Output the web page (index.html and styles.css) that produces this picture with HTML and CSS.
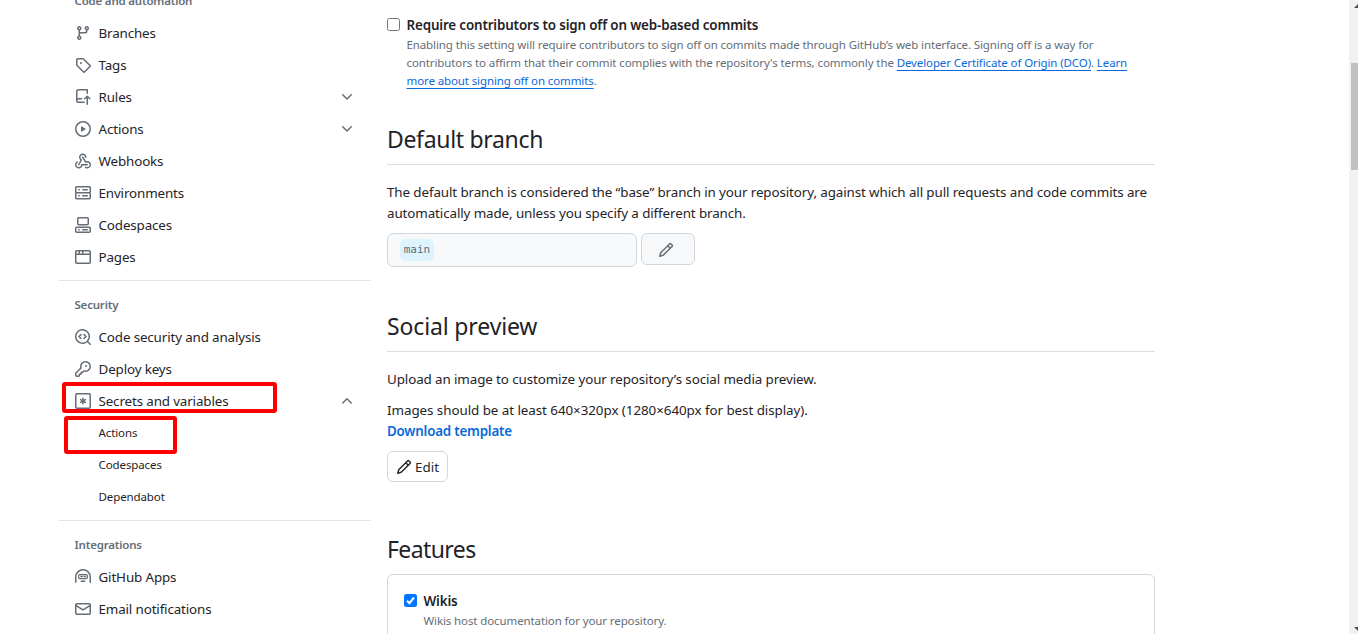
FILE: index.html
```
<!DOCTYPE html>
<html lang="en">
<head>
<meta charset="utf-8">
<title>Repository settings</title>
<link rel="stylesheet" href="styles.css">
</head>
<body>
<div class="page">
  <nav class="sidebar">
    <h3 class="group-title group-first">Code and automation</h3>
    <a class="item"><svg class="icon" viewBox="0 0 16 16"><path d="M9.5 3.25a2.25 2.25 0 1 1 3 2.122V6A2.5 2.5 0 0 1 10 8.5H6a1 1 0 0 0-1 1v1.128a2.251 2.251 0 1 1-1.5 0V5.372a2.25 2.25 0 1 1 1.5 0v1.836A2.493 2.493 0 0 1 6 7h4a1 1 0 0 0 1-1v-.628A2.25 2.25 0 0 1 9.5 3.25Zm-6 0a.75.75 0 1 0 1.5 0 .75.75 0 0 0-1.5 0Zm8.25-.75a.75.75 0 1 0 0 1.5.75.75 0 0 0 0-1.5ZM4.25 12a.75.75 0 1 0 0 1.5.75.75 0 0 0 0-1.5Z"/></svg><span>Branches</span></a>
    <a class="item"><svg class="icon" viewBox="0 0 16 16"><path d="M1 7.775V2.75C1 1.784 1.784 1 2.75 1h5.025c.464 0 .91.184 1.238.513l6.25 6.25a1.75 1.75 0 0 1 0 2.474l-5.026 5.026a1.75 1.75 0 0 1-2.474 0l-6.25-6.25A1.752 1.752 0 0 1 1 7.775Zm1.5 0c0 .066.026.13.073.177l6.25 6.25a.25.25 0 0 0 .354 0l5.025-5.025a.25.25 0 0 0 0-.354l-6.25-6.25a.25.25 0 0 0-.177-.073H2.75a.25.25 0 0 0-.25.25ZM6 5a1 1 0 1 1 0 2 1 1 0 0 1 0-2Z"/></svg><span>Tags</span></a>
    <a class="item"><svg class="icon" viewBox="0 0 16 16"><path d="M1 2.5A2.5 2.5 0 0 1 3.5 0h8.75a.75.75 0 0 1 .75.75v3.5a.75.75 0 0 1-1.5 0V1.5h-8a1 1 0 0 0-1 1v6.708A2.493 2.493 0 0 1 3.5 9h3.25a.75.75 0 0 1 0 1.5H3.5a1 1 0 0 0 0 2h5.75a.75.75 0 0 1 0 1.5H3.5A2.5 2.5 0 0 1 1 11.5Zm13.23 7.79v-.001l-1.224-1.224v6.184a.75.75 0 0 1-1.5 0V9.066L10.28 10.29a.75.75 0 0 1-1.06-1.061l2.505-2.504a.75.75 0 0 1 1.06 0L15.29 9.23a.751.751 0 0 1-.018 1.042.751.751 0 0 1-1.042.018Z"/></svg><span>Rules</span><svg class="icon chevron" viewBox="0 0 16 16"><path d="M12.78 5.22a.749.749 0 0 1 0 1.06l-4.25 4.25a.749.749 0 0 1-1.06 0L3.22 6.28a.749.749 0 1 1 1.06-1.06L8 8.939l3.72-3.719a.749.749 0 0 1 1.06 0Z"/></svg></a>
    <a class="item"><svg class="icon" viewBox="0 0 16 16"><path d="M8 0a8 8 0 1 1 0 16A8 8 0 0 1 8 0ZM1.5 8a6.5 6.5 0 1 0 13 0 6.5 6.5 0 0 0-13 0Zm4.879-2.773 4.264 2.559a.25.25 0 0 1 0 .428l-4.264 2.559A.25.25 0 0 1 6 10.559V5.442a.25.25 0 0 1 .379-.215Z"/></svg><span>Actions</span><svg class="icon chevron" viewBox="0 0 16 16"><path d="M12.78 5.22a.749.749 0 0 1 0 1.06l-4.25 4.25a.749.749 0 0 1-1.06 0L3.22 6.28a.749.749 0 1 1 1.06-1.06L8 8.939l3.72-3.719a.749.749 0 0 1 1.06 0Z"/></svg></a>
    <a class="item"><svg class="icon" viewBox="0 0 16 16"><path d="M5.5 4.25a2.25 2.25 0 0 1 4.5 0 .75.75 0 0 0 1.5 0 3.75 3.75 0 1 0-6.14 2.889l-2.272 4.258a.75.75 0 0 0 1.324.706L7 7.25a.75.75 0 0 0-.309-1.015A2.25 2.25 0 0 1 5.5 4.25Z"/><path d="M7.364 3.607a.75.75 0 0 1 1.03.257l2.608 4.349a3.75 3.75 0 1 1-.628 6.785.75.75 0 0 1 .752-1.299 2.25 2.25 0 1 0-.033-3.88.75.75 0 0 1-1.03-.256L7.107 4.636a.75.75 0 0 1 .257-1.03Z"/><path d="M2.9 8.776A.75.75 0 0 1 2.625 9.8 2.25 2.25 0 1 0 6 11.75a.75.75 0 0 1 .75-.751h5.5a.75.75 0 0 1 0 1.5H7.425a3.751 3.751 0 1 1-5.55-3.998.75.75 0 0 1 1.024.274Z"/></svg><span>Webhooks</span></a>
    <a class="item"><svg class="icon" viewBox="0 0 16 16"><path d="M1.75 1h12.5c.966 0 1.75.784 1.75 1.75v4c0 .372-.116.717-.314 1 .198.283.314.628.314 1v4a1.75 1.75 0 0 1-1.75 1.75H1.75A1.75 1.75 0 0 1 0 12.75v-4c0-.358.109-.707.314-1a1.739 1.739 0 0 1-.314-1v-4C0 1.784.784 1 1.75 1ZM1.5 2.75v4c0 .138.112.25.25.25h12.5a.25.25 0 0 0 .25-.25v-4a.25.25 0 0 0-.25-.25H1.75a.25.25 0 0 0-.25.25Zm.25 5.75a.25.25 0 0 0-.25.25v4c0 .138.112.25.25.25h12.5a.25.25 0 0 0 .25-.25v-4a.25.25 0 0 0-.25-.25ZM7 4.75A.75.75 0 0 1 7.75 4h4.5a.75.75 0 0 1 0 1.5h-4.5A.75.75 0 0 1 7 4.75ZM7.75 10h4.5a.75.75 0 0 1 0 1.5h-4.5a.75.75 0 0 1 0-1.5ZM3 4.75A.75.75 0 0 1 3.75 4h.5a.75.75 0 0 1 0 1.5h-.5A.75.75 0 0 1 3 4.75ZM3.75 10h.5a.75.75 0 0 1 0 1.5h-.5a.75.75 0 0 1 0-1.5Z"/></svg><span>Environments</span></a>
    <a class="item"><svg class="icon" viewBox="0 0 16 16"><path d="M0 11.25c0-.966.784-1.75 1.75-1.75h12.5c.966 0 1.75.784 1.75 1.75v3A1.75 1.75 0 0 1 14.25 16H1.75A1.75 1.75 0 0 1 0 14.25Zm2-9.5C2 .784 2.784 0 3.75 0h8.5C13.216 0 14 .784 14 1.75v5a1.75 1.75 0 0 1-1.75 1.75h-8.5A1.75 1.75 0 0 1 2 6.75Zm1.75-.25a.25.25 0 0 0-.25.25v5c0 .138.112.25.25.25h8.5a.25.25 0 0 0 .25-.25v-5a.25.25 0 0 0-.25-.25Zm-2 9.5a.25.25 0 0 0-.25.25v3c0 .138.112.25.25.25h12.5a.25.25 0 0 0 .25-.25v-3a.25.25 0 0 0-.25-.25Z"/><path d="M7 12.75a.75.75 0 0 1 .75-.75h4.5a.75.75 0 0 1 0 1.5h-4.5a.75.75 0 0 1-.75-.75Zm-4 0a.75.75 0 0 1 .75-.75h.5a.75.75 0 0 1 0 1.5h-.5a.75.75 0 0 1-.75-.75Z"/></svg><span>Codespaces</span></a>
    <a class="item"><svg class="icon" viewBox="0 0 16 16"><path d="M0 2.75C0 1.784.784 1 1.75 1h12.5c.966 0 1.75.784 1.75 1.75v10.5A1.75 1.75 0 0 1 14.25 15H1.75A1.75 1.75 0 0 1 0 13.25ZM14.5 6h-13v7.25c0 .138.112.25.25.25h12.5a.25.25 0 0 0 .25-.25Zm-6-3.5v2h6V2.75a.25.25 0 0 0-.25-.25ZM5 2.5v2h2v-2Zm-3.25 0a.25.25 0 0 0-.25.25V4.5h2v-2Z"/></svg><span>Pages</span></a>
    <hr class="rule">
    <h3 class="group-title">Security</h3>
    <a class="item wide"><svg class="icon" viewBox="0 0 16 16"><path d="M8.47 4.97a.75.75 0 0 0 0 1.06L9.94 7.5 8.47 8.97a.75.75 0 1 0 1.06 1.06l2-2a.75.75 0 0 0 0-1.06l-2-2a.75.75 0 0 0-1.06 0ZM6.53 6.03a.75.75 0 0 0-1.06-1.06l-2 2a.75.75 0 0 0 0 1.06l2 2a.75.75 0 1 0 1.06-1.06L5.06 7.5l1.47-1.47Z"/><path d="M12.246 13.307a7.501 7.501 0 1 1 1.06-1.06l2.474 2.473a.749.749 0 1 1-1.06 1.06l-2.474-2.473ZM1.5 7.5a6.002 6.002 0 0 0 3.608 5.504 6.002 6.002 0 0 0 6.486-1.117.748.748 0 0 1 .292-.293A6 6 0 1 0 1.5 7.5Z"/></svg><span>Code security and analysis</span></a>
    <a class="item wide"><svg class="icon" viewBox="0 0 16 16"><path d="M10.5 0a5.499 5.499 0 1 1-1.288 10.848l-.932.932a.749.749 0 0 1-.53.22H7v.75a.749.749 0 0 1-.22.53l-.5.5a.749.749 0 0 1-.53.22H5v.75a.749.749 0 0 1-.22.53l-.5.5a.749.749 0 0 1-.53.22h-2A1.75 1.75 0 0 1 0 14.25v-2c0-.199.079-.389.22-.53l4.932-4.932A5.5 5.5 0 0 1 10.5 0Zm-4 5.5c-.001.431.069.86.205 1.269a.75.75 0 0 1-.181.768L1.5 12.56v1.69c0 .138.112.25.25.25h1.69l.06-.06v-1.19a.75.75 0 0 1 .75-.75h1.19l.06-.06v-1.19a.75.75 0 0 1 .75-.75h1.19l1.023-1.025a.75.75 0 0 1 .768-.18A4 4 0 1 0 6.5 5.5ZM11 6a1 1 0 1 1 0-2 1 1 0 0 1 0 2Z"/></svg><span>Deploy keys</span></a>
    <a class="item wide marked"><svg class="icon line" viewBox="0 0 16 16"><rect x=".75" y=".75" width="14.5" height="14.5" rx="1.2"/><path d="M8 5.2v5.600M5.600 6.600l4.800 2.800M10.400 6.600 5.600 9.400"/></svg><span>Secrets and variables</span><svg class="icon chevron" viewBox="0 0 16 16"><path d="M3.22 10.53a.749.749 0 0 1 0-1.06l4.25-4.25a.749.749 0 0 1 1.06 0l4.25 4.25a.749.749 0 1 1-1.06 1.06L8 6.811 4.28 10.53a.749.749 0 0 1-1.06 0Z"/></svg></a>
    <a class="item sub marked-sub"><span>Actions</span></a>
    <a class="item sub"><span>Codespaces</span></a>
    <a class="item sub"><span>Dependabot</span></a>
    <hr class="rule">
    <h3 class="group-title">Integrations</h3>
    <a class="item wide"><svg class="icon line" viewBox="0 0 16 16"><path d="M.75 13.250V8a7.250 7.250 0 0 1 14.500 0v5.250"/><rect x="3.600" y="5.600" width="8.800" height="4" rx="1.300" stroke-width="1.200"/><path stroke-width="1.200" d="M5.600 7.100l1 .900.900-.9M8.800 7.100l1 .900.900-.9"/><path d="M6.250 12.250h3.500"/></svg><span>GitHub Apps</span></a>
    <a class="item wide"><svg class="icon" viewBox="0 0 16 16"><path d="M1.75 2h12.5c.966 0 1.75.784 1.75 1.75v8.5A1.75 1.75 0 0 1 14.25 14H1.75A1.75 1.75 0 0 1 0 12.25v-8.5C0 2.784.784 2 1.75 2ZM1.5 12.251c0 .138.112.25.25.25h12.5a.25.25 0 0 0 .25-.25V5.809L8.38 9.397a.75.75 0 0 1-.76 0L1.5 5.809v6.442Zm13-8.181v-.32a.25.25 0 0 0-.25-.25H1.75a.25.25 0 0 0-.25.25v.32L8 7.88Z"/></svg><span>Email notifications</span></a>
  </nav>
  <main class="content">
    <section class="signoff">
      <span class="box"></span>
      <div>
        <div class="label">Require contributors to sign off on web-based commits</div>
        <p class="note">Enabling this setting will require contributors to sign off on commits made through GitHub’s web interface. Signing off is a way for<br>contributors to affirm that their commit complies with the repository's terms, commonly the <a class="link">Developer Certificate of Origin (DCO)</a>. <a class="link">Learn</a><br><a class="link">more about signing off on commits</a>.</p>
      </div>
    </section>
    <section class="branch">
      <h2 class="heading">Default branch</h2>
      <p class="text">The default branch is considered the “base” branch in your repository, against which all pull requests and code commits are<br>automatically made, unless you specify a different branch.</p>
      <div class="branch-row">
        <div class="branch-name"><code class="chip">main</code></div>
        <button class="pencil-btn"><svg class="icon" viewBox="0 0 16 16"><path d="M11.013 1.427a1.75 1.75 0 0 1 2.474 0l1.086 1.086a1.75 1.75 0 0 1 0 2.474l-8.61 8.61c-.21.21-.47.364-.756.445l-3.251.93a.75.75 0 0 1-.927-.928l.929-3.25c.081-.286.235-.547.445-.758l8.61-8.61Zm.176 4.823L9.75 4.81l-6.286 6.287a.253.253 0 0 0-.064.108l-.558 1.953 1.953-.558a.253.253 0 0 0 .108-.064Zm1.238-3.763a.25.25 0 0 0-.354 0L10.811 3.75l1.439 1.44 1.263-1.263a.25.25 0 0 0 0-.354Z"/></svg></button>
      </div>
    </section>
    <section class="social">
      <h2 class="heading social-title">Social preview</h2>
      <p class="text upload">Upload an image to customize your repository’s social media preview.</p>
      <p class="text sizes">Images should be at least 640×320px (1280×640px for best display).</p>
      <a class="download">Download template</a>
      <button class="edit-btn"><svg class="icon" viewBox="0 0 16 16"><path d="M11.013 1.427a1.75 1.75 0 0 1 2.474 0l1.086 1.086a1.75 1.75 0 0 1 0 2.474l-8.61 8.61c-.21.21-.47.364-.756.445l-3.251.93a.75.75 0 0 1-.927-.928l.929-3.25c.081-.286.235-.547.445-.758l8.61-8.61Zm.176 4.823L9.75 4.81l-6.286 6.287a.253.253 0 0 0-.064.108l-.558 1.953 1.953-.558a.253.253 0 0 0 .108-.064Zm1.238-3.763a.25.25 0 0 0-.354 0L10.811 3.75l1.439 1.44 1.263-1.263a.25.25 0 0 0 0-.354Z"/></svg><span>Edit</span></button>
    </section>
    <section class="features">
      <h2 class="heading plain">Features</h2>
      <div class="card">
        <span class="box checked"><svg viewBox="0 0 13 13"><path d="M3 6.800 5.400 9.200 10 3.500"/></svg></span>
        <div>
          <div class="label wikis">Wikis</div>
          <p class="note">Wikis host documentation for your repository.</p>
        </div>
      </div>
    </section>
  </main>
  <div class="scrollbar">
    <svg class="arrow" viewBox="0 0 9 8"><path d="M5 8 9 4V8Z"/></svg>
    <div class="thumb"></div>
    <svg class="arrow" viewBox="0 0 9 8"><path d="M5 1H9V5Z"/></svg>
  </div>
</div>
</body>
</html>
```
FILE: styles.css
```
* { box-sizing: border-box; }
body {
  margin: 0;
  background: #fff;
  color: #1f2328;
  font-family: "Noto Sans", "Open Sans", sans-serif;
  font-size: 13.4px;
}
h2, h3, p { margin: 0; font-weight: 400; }
.page { display: flex; height: 634px; overflow: hidden; }
.sidebar { flex: none; width: 312px; margin-left: 59px; white-space: nowrap; }
.group-title {
  height: 32px;
  padding-left: 15.500px;
  color: #656d76;
  font-size: 11.5px;
  font-weight: 600;
  line-height: 32px;
  letter-spacing: -0.2px;
}
.group-first { margin-top: -15px; }
.item {
  position: relative;
  display: flex;
  align-items: center;
  height: 32px;
  padding: 0 16px;
  letter-spacing: -0.14px;
}
.item > span { margin-left: 7.500px; }
.icon { display: block; flex: none; width: 16px; height: 16px; fill: #656d76; }
.icon.line { fill: none; stroke: #656d76; stroke-width: 1.500; stroke-linecap: round; }
.chevron { margin-left: auto; }
.sub { padding: 0 16px 2px 32px; font-size: 11.5px; letter-spacing: -0.1px; }
.rule { height: 1px; margin: 7px 0 8px; border: 0; background: #e2e4e8; }
.marked::after, .marked-sub::after {
  content: "";
  position: absolute;
  box-sizing: border-box;
  border: 4px solid #f00;
  border-radius: 3px;
}
.marked::after { left: 3px; top: -3px; width: 215px; height: 31px; }
.marked-sub::after { left: 5px; top: -1px; width: 113px; height: 38px; }
.content { flex: none; width: 768px; margin-left: 16px; white-space: nowrap; }
.signoff { display: flex; gap: 6.500px; height: 91px; padding-top: 15px; }
.box { flex: none; width: 13px; height: 13px; margin-top: 3px; border: 1px solid #767676; border-radius: 2.500px; }
.checked { border: 0; background: #0075ff; }
.checked svg { display: block; fill: none; stroke: #fff; stroke-width: 2; }
.label { height: 21px; line-height: 21px; font-weight: 600; letter-spacing: -0.15px; }
.note { color: #656d76; font-size: 11.5px; line-height: 18px; letter-spacing: -0.11px; }
.link { color: #0969da; text-decoration: underline; text-underline-offset: 3px; }
.branch { height: 214px; padding-top: 30px; }
.heading { height: 44px; border-bottom: 1px solid #d8dee4; font-size: 23px; line-height: 36px; letter-spacing: -0.32px; }
.social-title { letter-spacing: -0.14px; }
.text { line-height: 21px; letter-spacing: -0.11px; }
.branch .text { margin-top: 17px; }
.branch-row { display: flex; align-items: flex-start; gap: 4px; margin-top: 9px; }
.branch-name { width: 250px; height: 34px; padding: 5px 12px; border: 1px solid #d0d7de; border-radius: 6px; background: #f6f8fa; }
.chip { display: block; width: 34px; height: 22px; border-radius: 6px; background: #ddf4ff; color: #656d76; font: 11px/22px "DejaVu Sans Mono", monospace; text-align: center; }
button { margin: 0; color: #24292f; font: inherit; border: 1px solid #d0d7de; border-radius: 6px; }
.pencil-btn { width: 54px; height: 32px; padding: 2px 16px 0; background: #f6f8fa; }
.social { height: 225px; padding-top: 3px; }
.upload { margin-top: 17px; }
.sizes { margin-top: 10px; letter-spacing: -0.06px; }
.download { display: block; height: 21px; color: #0969da; font-weight: 600; line-height: 21px; letter-spacing: -0.22px; }
.edit-btn { display: flex; align-items: center; gap: 3px; width: 61px; height: 31px; margin-top: 9px; padding: 0 8px; background: #fff; }
.edit-btn .icon { fill: #24292f; }
.features { padding-top: 1px; }
.plain { height: 43px; border: 0; letter-spacing: -0.6px; }
.card { display: flex; gap: 6.500px; height: 80px; padding: 16px; border: 1px solid #d0d7de; border-radius: 6px; }
.scrollbar { display: flex; flex-direction: column; justify-content: space-between; width: 9px; height: 634px; margin-left: auto; background: #f1f1f1; }
.arrow { display: block; width: 9px; height: 8px; fill: #505050; }
.thumb { width: 7px; height: 107px; margin: 55px 0 auto 2px; background: #c1c1c1; }
```
